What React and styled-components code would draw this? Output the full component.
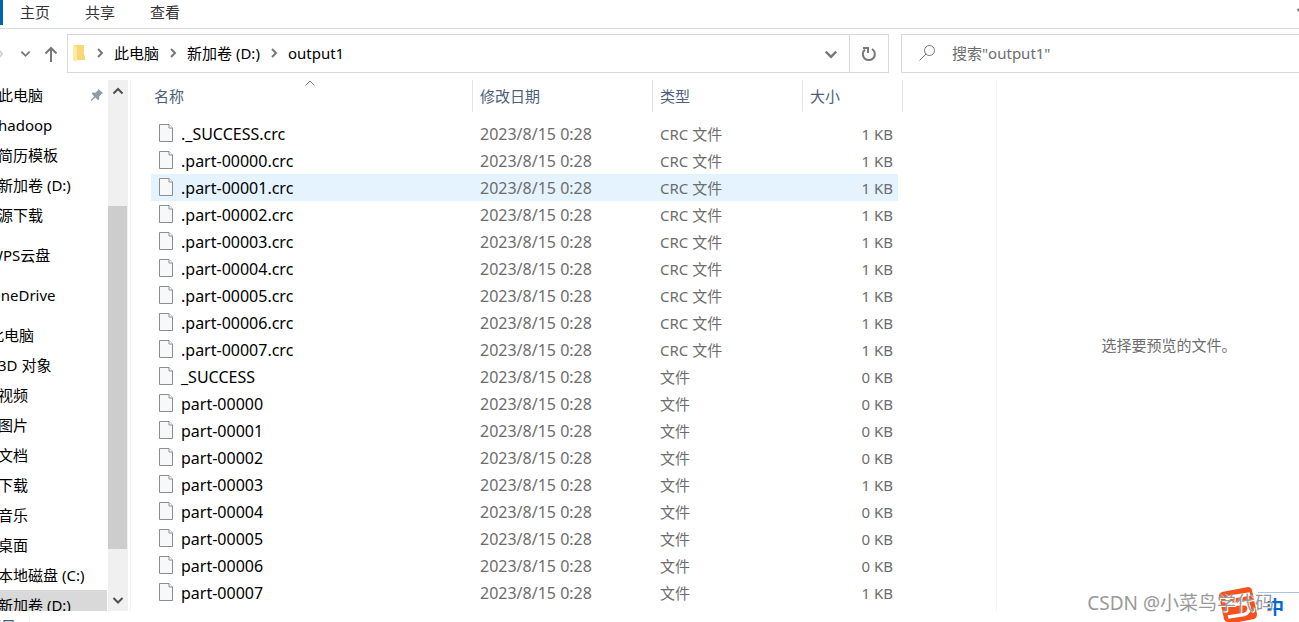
import React, { useState } from "react";
import styled, { createGlobalStyle } from "styled-components";

const places = [
  { id: "quick-pc", name: "此电脑", pinned: true },
  { id: "hadoop", name: "hadoop" },
  { id: "resume", name: "简历模板" },
  { id: "quick-d", name: "新加卷 (D:)" },
  { id: "downloads-src", name: "源下载" },
  { id: "wps", name: "WPS云盘", root: true },
  { id: "onedrive", name: "OneDrive", root: true },
  { id: "pc", name: "此电脑", root: true },
  { id: "3d", name: "3D 对象" },
  { id: "video", name: "视频" },
  { id: "pictures", name: "图片" },
  { id: "docs", name: "文档" },
  { id: "downloads", name: "下载" },
  { id: "music", name: "音乐" },
  { id: "desktop", name: "桌面" },
  { id: "c", name: "本地磁盘 (C:)" },
  { id: "d", name: "新加卷 (D:)" },
];

const files = [
  { name: "._SUCCESS.crc", type: "CRC 文件", size: 1 },
  { name: ".part-00000.crc", type: "CRC 文件", size: 1 },
  { name: ".part-00001.crc", type: "CRC 文件", size: 1 },
  { name: ".part-00002.crc", type: "CRC 文件", size: 1 },
  { name: ".part-00003.crc", type: "CRC 文件", size: 1 },
  { name: ".part-00004.crc", type: "CRC 文件", size: 1 },
  { name: ".part-00005.crc", type: "CRC 文件", size: 1 },
  { name: ".part-00006.crc", type: "CRC 文件", size: 1 },
  { name: ".part-00007.crc", type: "CRC 文件", size: 1 },
  { name: "_SUCCESS", type: "文件", size: 0 },
  { name: "part-00000", type: "文件", size: 0 },
  { name: "part-00001", type: "文件", size: 0 },
  { name: "part-00002", type: "文件", size: 0 },
  { name: "part-00003", type: "文件", size: 1 },
  { name: "part-00004", type: "文件", size: 0 },
  { name: "part-00005", type: "文件", size: 0 },
  { name: "part-00006", type: "文件", size: 0 },
  { name: "part-00007", type: "文件", size: 1 },
];

const UP = "M1.500 8.500 6 4l4.500 4.500";
const DOWN = "M1.500 4 6 8.500 10.500 4";
const RIGHT = "M4 2l4 4-4 4";

const Chevron = ({ d, size = 12, color = "#777777", weight = 2 }) => (
  <svg width={size} height={size} viewBox="0 0 12 12" fill="none" stroke={color} strokeWidth={weight} aria-hidden="true">
    <path d={d} />
  </svg>
);

const FileIcon = () => (
  <svg width="16" height="19" viewBox="0 0 16 19" aria-hidden="true">
    <path d="M1.500.5h9.500l3.500 3.500v13.500h-13z" fill="#f7f8f9" stroke="#8d8d8d" />
    <path d="M11 .5v3.500h3.500" fill="#ffffff" stroke="#8d8d8d" />
  </svg>
);

const FolderIcon = () => (
  <svg width="13" height="18" viewBox="0 0 13 18" aria-hidden="true">
    <path d="M1 1h10v10l1 1v4H1z" fill="#f8d775" />
    <path d="M0 1l4 2v12.500L3 18l-3-2z" fill="#ffe9a6" />
  </svg>
);

const PinIcon = () => (
  <svg width="14" height="14" viewBox="0 0 14 14" aria-hidden="true">
    <path
      d="M8.500 1 13 5.300l-1.400.6-2.400 2.500.1 2.600-1.300 1.200-2.700-2.800L1.500 13l-.9-.7 3.500-4L1.600 5.800l1.200-1.200 2.700.1L8 2.300z"
      fill="#8f9ca8"
    />
  </svg>
);

const SogouLogo = () => (
  <svg width="39" height="36" viewBox="0 0 39 36" aria-hidden="true">
    <path d="M3 6 29 1q3 0 4 3l5 24q0 4-3 5l-15 3H9q-3 0-4-3L0 10q0-3 3-4z" fill="#f4511e" />
    <path d="M31 8 12 11q-4 1-4 4t4 3.500l13-1q5 .5 5 5t-5 6L9 31" fill="none" stroke="#ffffff" strokeWidth="3.500" />
  </svg>
);

const App = () => {
  const [selected, setSelected] = useState(".part-00001.crc");
  const [place, setPlace] = useState("d");
  const [keyword, setKeyword] = useState("");

  return (
    <>
      <GlobalStyle />
      <Window>
        <Ribbon>
          <FileTab aria-label="文件" />
          <Tab>主页</Tab>
          <Tab>共享</Tab>
          <Tab>查看</Tab>
          <ExpandButton aria-label="展开功能区">
            <Chevron d={DOWN} />
          </ExpandButton>
        </Ribbon>
        <Toolbar>
          <History>
            <ForwardButton aria-label="前进" disabled>
              <svg width="4" height="12" viewBox="0 0 4 12" fill="none" stroke="#d2d2d2" strokeWidth="2">
                <path d="M-2 1l4 5-4 5" />
              </svg>
            </ForwardButton>
            <IconButton aria-label="最近浏览的位置">
              <Chevron d={DOWN} size={11} />
            </IconButton>
            <IconButton aria-label="向上">
              <svg width="14" height="16" viewBox="0 0 14 16" fill="none" stroke="#777777" strokeWidth="2">
                <path d="M7 16V2M1.500 7.500 7 2l5.500 5.500" />
              </svg>
            </IconButton>
          </History>
          <AddressBar>
            <Crumbs aria-label="路径">
              <FolderIcon />
              {["此电脑", "新加卷 (D:)", "output1"].map((crumb) => (
                <React.Fragment key={crumb}>
                  <Chevron d={RIGHT} />
                  <Crumb href="#">{crumb}</Crumb>
                </React.Fragment>
              ))}
            </Crumbs>
            <DropButton aria-label="以前的位置">
              <Chevron d={DOWN} size={14} />
            </DropButton>
            <RefreshButton aria-label="刷新">
              <svg width="16" height="16" viewBox="0 0 16 16" fill="none" stroke="#777777" strokeWidth="2">
                <path d="M11 3a6 6 0 1 1-7 .5" />
                <path d="M2 2h5v5" />
              </svg>
            </RefreshButton>
          </AddressBar>
          <SearchBox>
            <svg width="16" height="16" viewBox="0 0 16 16" fill="none" stroke="#777777" aria-hidden="true">
              <circle cx="10.500" cy="5.500" r="5" />
              <path d="M7 9 .5 15.500" />
            </svg>
            <SearchInput
              aria-label="搜索"
              placeholder={'搜索"output1"'}
              value={keyword}
              onChange={(e) => setKeyword(e.target.value)}
            />
          </SearchBox>
        </Toolbar>
        <Body>
          <Sidebar aria-label="导航窗格">
            {places.map((item) => (
              <Place key={item.id} $root={item.root} $active={item.id === place} onClick={() => setPlace(item.id)}>
                {item.name}
                {item.pinned && <PinIcon />}
              </Place>
            ))}
          </Sidebar>
          <ScrollBar>
            <Chevron d={UP} color="#505050" />
            <Thumb />
            <Chevron d={DOWN} color="#505050" />
          </ScrollBar>
          <FilePane>
            <FileTable>
              <colgroup>
                <NameCol />
                <DateCol />
                <TypeCol />
                <SizeCol />
              </colgroup>
              <thead>
                <tr>
                  <HeadCell $first aria-sort="ascending">
                    名称
                    <SortMark>
                      <Chevron d={UP} weight={1} />
                    </SortMark>
                  </HeadCell>
                  <HeadCell>修改日期</HeadCell>
                  <HeadCell>类型</HeadCell>
                  <HeadCell>大小</HeadCell>
                </tr>
              </thead>
              <tbody>
                <Spacer aria-hidden="true">
                  <td colSpan={4} />
                </Spacer>
                {files.map((file) => (
                  <FileRow key={file.name} $active={file.name === selected} onClick={() => setSelected(file.name)}>
                    <NameCell>
                      <FileName>
                        <FileIcon />
                        {file.name}
                      </FileName>
                    </NameCell>
                    <DateCell>2023/8/15 0:28</DateCell>
                    <Cell>{file.type}</Cell>
                    <SizeCell>{file.size} KB</SizeCell>
                  </FileRow>
                ))}
              </tbody>
            </FileTable>
          </FilePane>
          <Preview>选择要预览的文件。</Preview>
        </Body>
        <StatusBar>
          <ItemCount>项目</ItemCount>
        </StatusBar>
        <InputMethod>
          <SogouLogo />
          <InputMode>中</InputMode>
        </InputMethod>
        <Watermark>CSDN @小菜鸟学代码</Watermark>
      </Window>
    </>
  );
};

const GlobalStyle = createGlobalStyle`
  * {
    box-sizing: border-box;
  }
  body {
    margin: 0;
    background: #ffffff;
    color: #000000;
    font-family: "Noto Sans", "Noto Sans CJK SC", sans-serif;
    font-size: 15px;
    line-height: 20px;
  }
  button,
  input {
    padding: 0;
    border: none;
    background: none;
    font: inherit;
    color: inherit;
  }
`;

const Window = styled.div`
  position: relative;
  display: flex;
  flex-direction: column;
  height: 100vh;
  overflow: hidden;
`;

const Ribbon = styled.div`
  display: flex;
  align-items: flex-start;
  flex: none;
  height: 29px;
  border-bottom: 1px solid #dadada;
  overflow: hidden;
`;

const FileTab = styled.button`
  width: 3px;
  height: 25px;
  margin-right: 17px;
  background: #0063b1;
`;

const Tab = styled.button`
  height: 23px;
  margin-right: 35px;
  color: #333333;
`;

const ExpandButton = styled.button`
  display: flex;
  flex: none;
  margin: 5px -9px 0 auto;
`;

const Toolbar = styled.div`
  display: flex;
  flex: none;
  height: 51px;
  padding: 5px 0 7px;
`;

const History = styled.div`
  display: flex;
  align-items: center;
  gap: 13px;
  width: 67px;
`;

const IconButton = styled.button`
  display: flex;
`;

const ForwardButton = styled(IconButton)`
  margin-right: 3px;
`;

const AddressBar = styled.div`
  display: flex;
  flex: 1;
  margin-right: 12px;
  border: 1px solid #d9d9d9;
`;

const Crumbs = styled.nav`
  display: flex;
  align-items: center;
  flex: 1;
  gap: 8px;
  padding: 0 0 2px 5px;
`;

const Crumb = styled.a`
  color: #000000;
  text-decoration: none;
`;

const DropButton = styled.button`
  display: flex;
  align-items: center;
  justify-content: center;
  width: 36px;
`;

const RefreshButton = styled(DropButton)`
  width: 39px;
  border-left: 1px solid #d9d9d9;
`;

const SearchBox = styled.div`
  display: flex;
  align-items: center;
  gap: 17px;
  width: 398px;
  padding: 0 0 2px 17px;
  border: 1px solid #d9d9d9;
  border-right: none;
`;

const SearchInput = styled.input`
  flex: 1;
  outline: none;
  &::placeholder {
    color: #6d6d6d;
    opacity: 1;
  }
`;

const Body = styled.div`
  display: flex;
  flex: 1;
  min-height: 0;
`;

const Sidebar = styled.nav`
  flex: none;
  width: 107px;
  margin-right: 1px;
  overflow: hidden;
`;

const Place = styled.button`
  display: flex;
  align-items: center;
  justify-content: space-between;
  width: 100%;
  height: 30px;
  margin: ${(props) => (props.$root ? "10px 0 0" : "0")};
  padding-right: 3px;
  text-indent: ${(props) => (props.$root ? "-11px" : "-2px")};
  white-space: nowrap;
  background: ${(props) => (props.$active ? "#d9d9d9" : "none")};
`;

const ScrollBar = styled.div`
  display: flex;
  flex-direction: column;
  align-items: center;
  justify-content: space-between;
  flex: none;
  width: 20px;
  padding: 5px 1px 5px 0;
  background: #f0f0f0;
`;

const Thumb = styled.div`
  width: 100%;
  height: 66%;
  margin-top: 64px;
  background: #cdcdcd;
`;

const FilePane = styled.main`
  flex: 1;
  margin-left: 2px;
  padding-left: 20px;
  border-left: 1px solid #f3f3f3;
  overflow: hidden;
`;

const FileTable = styled.table`
  width: 752px;
  table-layout: fixed;
  border-collapse: separate;
  border-spacing: 0;
`;

const NameCol = styled.col`
  width: 322px;
`;

const DateCol = styled.col`
  width: 180px;
`;

const TypeCol = styled.col`
  width: 150px;
`;

const SizeCol = styled.col`
  width: 100px;
`;

const HeadCell = styled.th`
  position: relative;
  height: 32px;
  padding: 0 0 0 ${(props) => (props.$first ? "3px" : "7px")};
  border-right: 1px solid #e5e5e5;
  color: #4c607a;
  font-weight: normal;
  text-align: left;
`;

const SortMark = styled.span`
  position: absolute;
  top: -3px;
  left: 0;
  right: 4px;
  display: flex;
  justify-content: center;
`;

const Spacer = styled.tr`
  height: 8px;
  td {
    padding: 0;
  }
`;

const FileRow = styled.tr`
  td {
    background-color: ${(props) => (props.$active ? "#e5f3ff" : "transparent")};
  }
`;

const Cell = styled.td`
  height: 27px;
  padding: 0 0 0 7px;
  color: #6d6d6d;
`;

const NameCell = styled(Cell)`
  color: #000000;
  font-size: 16px;
`;

const DateCell = styled(Cell)`
  font-size: 16px;
`;

const SizeCell = styled(Cell)`
  padding-right: 5px;
  border-right: 5px solid transparent;
  background-clip: padding-box;
  text-align: right;
`;

const FileName = styled.span`
  display: flex;
  align-items: center;
  gap: 7px;
`;

const Preview = styled.aside`
  display: flex;
  align-items: center;
  justify-content: center;
  flex: none;
  width: 303px;
  padding: 0 0 2px 42px;
  border-left: 1px solid #f3f3f3;
  color: #6d6d6d;
`;

const StatusBar = styled.footer`
  display: flex;
  flex: none;
  height: 11px;
  padding-top: 5px;
  overflow: hidden;
`;

const ItemCount = styled.span`
  width: 30px;
  height: 20px;
  border-right: 1px solid #f0f0f0;
  color: #4c607a;
  text-indent: -14px;
  white-space: nowrap;
`;

const InputMethod = styled.div`
  position: absolute;
  right: 0;
  bottom: 0;
  display: flex;
  align-items: flex-end;
  width: 80px;
`;

const InputMode = styled.span`
  flex: 1;
  height: 30px;
  padding: 4px 0 0 8px;
  border-top: 1px solid #a9c4e6;
  color: #0067d6;
  font-size: 18px;
  font-weight: bold;
`;

const Watermark = styled.div`
  position: absolute;
  right: 25px;
  bottom: 9px;
  color: #999999;
  font-size: 19px;
  text-shadow: 1px 1px 0 #ffffff;
`;

export default App;
